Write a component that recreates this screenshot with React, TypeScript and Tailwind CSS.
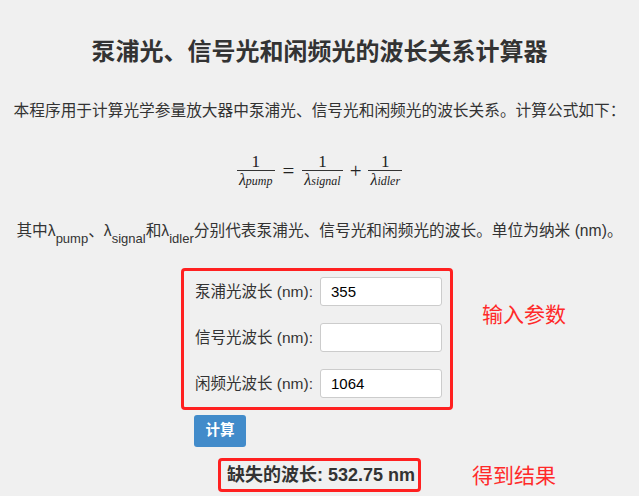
import React, { useState } from "react";

const font = { fontFamily: '"Liberation Sans", "Noto Sans CJK SC", sans-serif' };

const Frac: React.FC<{ sub: string }> = ({ sub }) => (
  <span className="inline-flex flex-col items-center mx-[3px]">
    <span className="text-[17px] leading-[17px] px-[2px]">1</span>
    <span className="h-px w-full bg-[#333]" />
    <span className="text-[16px] leading-[18px] px-[2px] whitespace-nowrap">
      <i>λ</i>
      <i className="text-[12px]">{sub}</i>
    </span>
  </span>
);

const Row: React.FC<{
  label: string;
  value: string;
  onChange: (v: string) => void;
}> = ({ label, value, onChange }) => (
  <div className="flex items-center h-[29px]">
    <label className="w-[125px] text-[15.5px] text-[#333]">{label}</label>
    <input
      className="w-[122px] h-[29px] bg-white border border-[#ccc] rounded-[3px] px-[10px] text-[15px] text-black outline-none"
      value={value}
      onChange={(e) => onChange(e.target.value)}
    />
  </div>
);

export default function App() {
  const [pump, setPump] = useState("355");
  const [signal, setSignal] = useState("");
  const [idler, setIdler] = useState("1064");

  return (
    <div className="relative w-[639px] h-[496px] overflow-hidden bg-[#f0f0f0] text-[#333]" style={font}>
      <div className="flex flex-col items-center">
        <h1 className="mt-[37px] text-[24px] leading-[30px] font-bold text-[#333]">
          泵浦光、信号光和闲频光的波长关系计算器
        </h1>

        <p className="mt-[32px] text-[15.7px] leading-[24px] whitespace-nowrap">
          本程序用于计算光学参量放大器中泵浦光、信号光和闲频光的波长关系。计算公式如下：
        </p>

        {/* 公式 */}
        <div
          className="mt-[31px] h-[35px] flex items-center text-[#222]"
          style={{ fontFamily: '"Liberation Serif", serif' }}
        >
          <Frac sub="pump" />
          <span className="text-[21px] mx-[5px]">=</span>
          <Frac sub="signal" />
          <span className="text-[21px] mx-[4px]">+</span>
          <Frac sub="idler" />
        </div>

        <p className="mt-[30px] h-[24px] text-[15.7px] leading-[24px] whitespace-nowrap">
          其中λ<sub className="text-[13px] align-[-4px]">pump</sub>、λ
          <sub className="text-[13px] align-[-4px]">signal</sub>和λ
          <sub className="text-[13px] align-[-4px]">idler</sub>
          分别代表泵浦光、信号光和闲频光的波长。单位为纳米 (nm)。
        </p>

        <div className="w-[272px] ml-[-5px] mt-[25px] flex flex-col">
          <div className="border-[3px] border-[#ff2020] rounded-[4px] pl-[11px] pt-[6px] pb-[9px] flex flex-col gap-[17px]">
            <Row label="泵浦光波长 (nm):" value={pump} onChange={setPump} />
            <Row label="信号光波长 (nm):" value={signal} onChange={setSignal} />
            <Row label="闲频光波长 (nm):" value={idler} onChange={setIdler} />
          </div>
          <button className="mt-[5px] ml-[13px] w-[52px] h-[32px] rounded-[3px] bg-[#428bca] text-white text-[14.5px] font-bold">
            计算
          </button>
        </div>

        <div className="mt-[11px] h-[34px] pl-[6px] pr-[3px] border-[3px] border-[#ff2020] rounded-[4px] flex items-center">
          <span className="text-[18px] font-bold text-[#333] whitespace-nowrap">缺失的波长: 532.75 nm</span>
        </div>
      </div>

      {/* 标注 */}
      <span className="absolute left-[482px] top-[299px] text-[21px] text-[#ff2a2a]">输入参数</span>
      <span className="absolute left-[472px] top-[460px] text-[21px] text-[#ff2a2a]">得到结果</span>
    </div>
  );
}
